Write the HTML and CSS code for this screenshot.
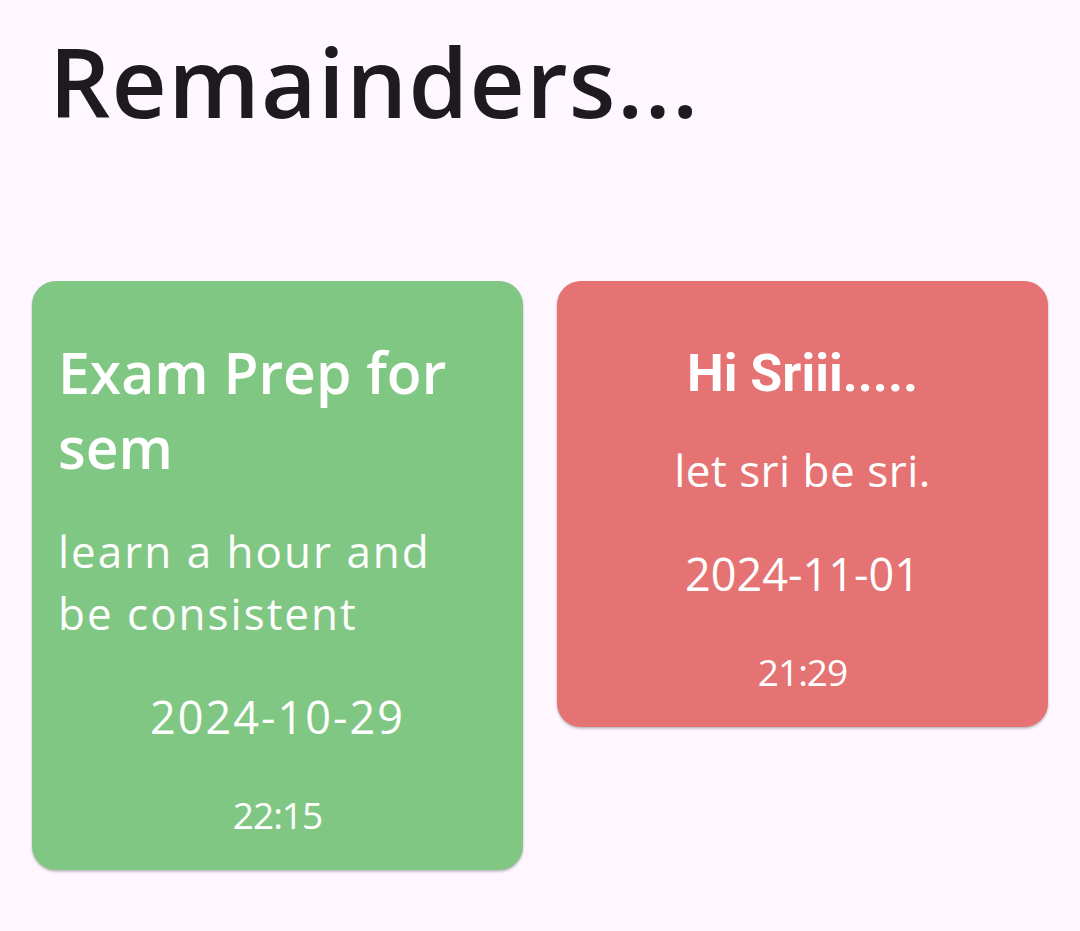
FILE: index.html
```html
<!DOCTYPE html>
<html lang="en">
<head>
<meta charset="utf-8">
<title>Remainders</title>
<link rel="stylesheet" href="styles.css">
</head>
<body>
<main class="screen">
  <h1 class="page-title">Remainders...</h1>
  <section class="cards">
    <article class="card card-green">
      <h2 class="card-title">Exam Prep for sem</h2>
      <p class="card-desc">learn a hour and be consistent</p>
      <p class="card-date">2024-10-29</p>
      <p class="card-time">22:15</p>
    </article>
    <article class="card card-red">
      <h2 class="card-title card-title-roboto">Hi Sriii.....</h2>
      <p class="card-desc">let sri be sri.</p>
      <p class="card-date">2024-11-01</p>
      <p class="card-time">21:29</p>
    </article>
  </section>
</main>
</body>
</html>
```

FILE: styles.css
```css
html, body {
  margin: 0;
  padding: 0;
}

body {
  background: #fef7ff;
  font-family: "Open Sans", "Noto Sans", sans-serif;
  width: 1080px;
  height: 931px;
  overflow: hidden;
}

.screen {
  display: flex;
  flex-direction: column;
}

.page-title {
  margin: 0;
  padding: 16px 0 0 49px;
  font-size: 96px;
  line-height: 130px;
  font-weight: 600;
  letter-spacing: 1.3px;
  color: #1d1b20;
}

.cards {
  display: flex;
  align-items: flex-start;
  gap: 34px;
  padding: 0 0 0 32px;
  margin-top: 135px;
}

.card {
  width: 491px;
  box-sizing: border-box;
  border-radius: 24px;
  padding: 54px 26px 30px 26px;
  display: flex;
  flex-direction: column;
  color: #ffffff;
  box-shadow: 0 2px 3px rgba(0, 0, 0, 0.18), 0 1px 2px rgba(0, 0, 0, 0.12);
}

.card-green {
  background: #81c784;
}

.card-red {
  background: #e57373;
  align-items: center;
  text-align: center;
}

.card-title {
  margin: 0;
  font-size: 57px;
  line-height: 75px;
  font-weight: 600;
}

.card-title-roboto {
  font-family: Roboto, "Liberation Sans", sans-serif;
  font-weight: 700;
  font-size: 52px;
  line-height: 70px;
  margin-top: 4px;
}

.card-desc {
  margin: 35px 0 0 0;
  font-size: 44px;
  line-height: 62px;
  letter-spacing: 2px;
  font-weight: 400;
}

.card-red .card-desc {
  margin-top: 30px;
  letter-spacing: 0.5px;
}

.card-date {
  margin: 43px 0 0 0;
  font-size: 45px;
  line-height: 60px;
  letter-spacing: 2px;
  text-align: center;
}

.card-red .card-date {
  letter-spacing: 0;
}

.card-time {
  margin: 43px 0 0 0;
  font-size: 37px;
  line-height: 50px;
  letter-spacing: -1px;
  text-align: center;
}
```
